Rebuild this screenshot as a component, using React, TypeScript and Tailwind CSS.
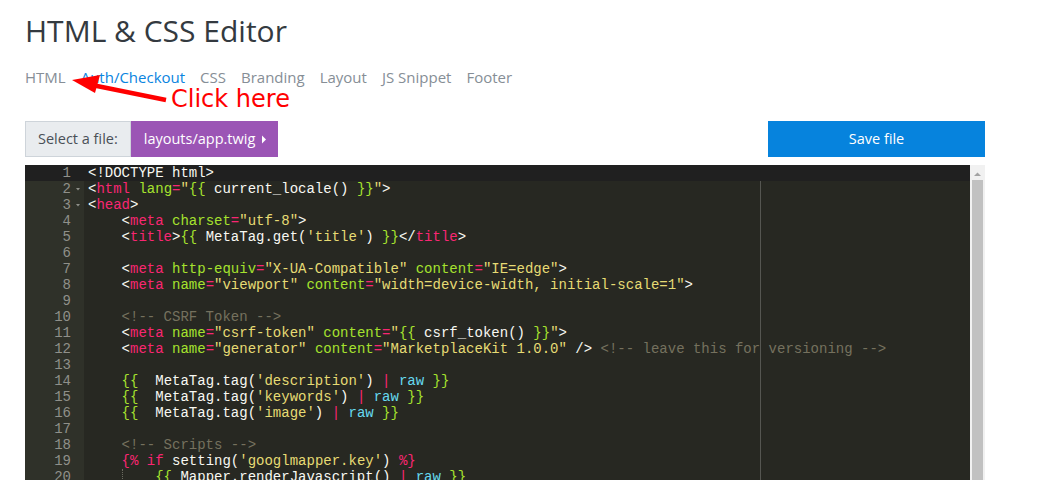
import React from 'react';

type Tok = [string, string];

const COLORS: Record<string, string> = {
  w: 'text-[#f8f8f2]',
  p: 'text-[#f92672]',
  g: 'text-[#a6e22e]',
  y: 'text-[#e6db74]',
  c: 'text-[#66d9ef]',
  m: 'text-[#75715e]',
};

const I = '    ';

const lines: { toks: Tok[]; fold?: boolean; guide?: boolean }[] = [
  { toks: [['w', '<!DOCTYPE html>']] },
  {
    fold: true,
    toks: [
      ['w', '<'], ['p', 'html'], ['w', ' '], ['g', 'lang'], ['p', '='], ['y', '"'],
      ['g', '{{'], ['w', ' current_locale() '], ['g', '}}'], ['y', '"'], ['w', '>'],
    ],
  },
  { fold: true, toks: [['w', '<'], ['p', 'head'], ['w', '>']] },
  {
    toks: [
      ['w', I + '<'], ['p', 'meta'], ['w', ' '], ['g', 'charset'], ['p', '='], ['y', '"utf-8"'], ['w', '>'],
    ],
  },
  {
    toks: [
      ['w', I + '<'], ['p', 'title'], ['w', '>'], ['g', '{{'], ['w', ' MetaTag.get('], ['y', "'title'"],
      ['w', ') '], ['g', '}}'], ['w', '</'], ['p', 'title'], ['w', '>'],
    ],
  },
  { toks: [] },
  {
    toks: [
      ['w', I + '<'], ['p', 'meta'], ['w', ' '], ['g', 'http-equiv'], ['p', '='], ['y', '"X-UA-Compatible"'],
      ['w', ' '], ['g', 'content'], ['p', '='], ['y', '"IE=edge"'], ['w', '>'],
    ],
  },
  {
    toks: [
      ['w', I + '<'], ['p', 'meta'], ['w', ' '], ['g', 'name'], ['p', '='], ['y', '"viewport"'],
      ['w', ' '], ['g', 'content'], ['p', '='], ['y', '"width=device-width, initial-scale=1"'], ['w', '>'],
    ],
  },
  { toks: [] },
  { toks: [['w', I], ['m', '<!-- CSRF Token -->']] },
  {
    toks: [
      ['w', I + '<'], ['p', 'meta'], ['w', ' '], ['g', 'name'], ['p', '='], ['y', '"csrf-token"'],
      ['w', ' '], ['g', 'content'], ['p', '='], ['y', '"'], ['g', '{{'], ['w', ' csrf_token() '],
      ['g', '}}'], ['y', '"'], ['w', '>'],
    ],
  },
  {
    toks: [
      ['w', I + '<'], ['p', 'meta'], ['w', ' '], ['g', 'name'], ['p', '='], ['y', '"generator"'],
      ['w', ' '], ['g', 'content'], ['p', '='], ['y', '"MarketplaceKit 1.0.0"'], ['w', ' /> '],
      ['m', '<!-- leave this for versioning -->'],
    ],
  },
  { toks: [] },
  {
    toks: [
      ['w', I], ['g', '{{'], ['w', '  MetaTag.tag('], ['y', "'description'"], ['w', ') '], ['p', '|'],
      ['w', ' '], ['c', 'raw'], ['w', ' '], ['g', '}}'],
    ],
  },
  {
    toks: [
      ['w', I], ['g', '{{'], ['w', '  MetaTag.tag('], ['y', "'keywords'"], ['w', ') '], ['p', '|'],
      ['w', ' '], ['c', 'raw'], ['w', ' '], ['g', '}}'],
    ],
  },
  {
    toks: [
      ['w', I], ['g', '{{'], ['w', '  MetaTag.tag('], ['y', "'image'"], ['w', ') '], ['p', '|'],
      ['w', ' '], ['c', 'raw'], ['w', ' '], ['g', '}}'],
    ],
  },
  { toks: [] },
  { toks: [['w', I], ['m', '<!-- Scripts -->']] },
  {
    toks: [
      ['w', I], ['p', '{%'], ['w', ' '], ['p', 'if'], ['w', ' setting('], ['y', "'googlmapper.key'"],
      ['w', ') '], ['p', '%}'],
    ],
  },
  {
    guide: true,
    toks: [
      ['g', '{{'], ['w', ' Mapper.renderJavascript() '], ['p', '|'], ['w', ' '], ['c', 'raw'], ['w', ' '], ['g', '}}'],
    ],
  },
];

const tabs = ['HTML', 'Auth/Checkout', 'CSS', 'Branding', 'Layout', 'JS Snippet', 'Footer'];

const App: React.FC = () => {
  return (
    <div className="relative min-h-screen bg-white pl-[25px] pr-[65px] font-['Open_Sans',sans-serif]">
      <h1 className="pt-[12px] text-[30px] leading-[38px] text-[#343a40]">HTML &amp; CSS Editor</h1>

      {/* Tabs */}
      <div className="mt-[16px] flex gap-[15px] text-[15px] leading-[22px]">
        {tabs.map((t) => (
          <span key={t} className={t === 'Auth/Checkout' ? 'text-[#0a84e0]' : 'text-[#868e96]'}>
            {t}
          </span>
        ))}
      </div>

      {/* File row */}
      <div className="mt-[33px] flex justify-between text-[14.5px]">
        <div className="flex h-[36px]">
          <div className="flex items-center border border-[#ced4da] bg-[#e9ecef] px-[12px] text-[#495057]">
            Select a file:
          </div>
          <button className="flex items-center gap-[6px] bg-[#9b55b5] pl-[13px] pr-[11px] text-white">
            layouts/app.twig
            <svg width="6" height="9" viewBox="0 0 6 9">
              <path d="M1 0.5 L5 4.5 L1 8.5 Z" fill="#fff" />
            </svg>
          </button>
        </div>
        <button className="h-[36px] w-[217px] bg-[#0683dd] text-white">Save file</button>
      </div>

      {/* Editor */}
      <div className="mt-[8px] flex">
        <div className="relative flex-1 overflow-hidden bg-[#272822] font-['Liberation_Mono',monospace] text-[14px] leading-[16px]">
          {lines.map((ln, i) => (
            <div key={i} className={`flex h-[16px] ${i === 0 ? 'bg-[#202020]' : ''}`}>
              <div
                className={`flex w-[59px] shrink-0 items-center text-[#8f908a] ${
                  i === 0 ? 'bg-[#202020]' : 'bg-[#2f3129]'
                }`}
              >
                <span className="w-[46px] text-right">{i + 1}</span>
                {ln.fold && (
                  <svg width="13" height="16" viewBox="0 0 13 16">
                    <path d="M5 7 L9 7 L7 9.5 Z" fill="#8f908a" />
                  </svg>
                )}
              </div>
              <div className="whitespace-pre pl-[4px]">
                {ln.guide && (
                  <span className="relative">
                    {I + I}
                    <span className="absolute left-[33.6px] top-0 h-[16px] border-l border-dotted border-[#6b6b60]" />
                  </span>
                )}
                {ln.toks.map(([k, s], j) => (
                  <span key={j} className={COLORS[k]}>
                    {s}
                  </span>
                ))}
              </div>
            </div>
          ))}
          {/* print margin */}
          <div className="absolute bottom-0 left-[735px] top-[16px] w-px bg-[#555651]" />
        </div>
        <div className="w-[15px] shrink-0 bg-[#f1f1f1] pt-[5px]">
          <svg width="15" height="10" viewBox="0 0 15 10" className="block">
            <path d="M4 6 L11 6 L7.5 2.5 Z" fill="#a3a3a3" />
          </svg>
          <div className="mx-[2px] h-[320px] bg-[#c1c1c1]" />
        </div>
      </div>

      {/* Annotation */}
      <svg className="absolute left-0 top-0" width="300" height="120" viewBox="0 0 300 120">
        <line x1="166" y1="100" x2="92" y2="85" stroke="#f00" strokeWidth="4.5" />
        <path d="M72 80 L100 75 L95 93 Z" fill="#f00" />
      </svg>
      <span className="absolute left-[171px] top-[87px] font-['DejaVu_Sans',sans-serif] text-[24px] leading-[24px] text-[#f00]">
        Click here
      </span>
    </div>
  );
};

export default App;
